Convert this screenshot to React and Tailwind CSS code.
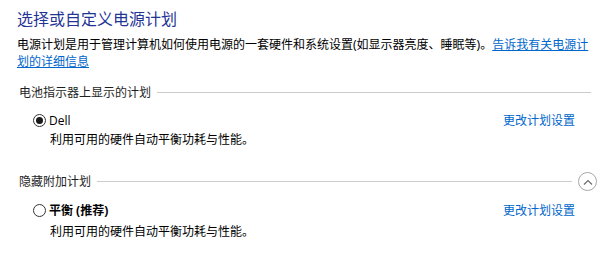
import React from 'react';

const Radio = ({ checked }) => (
    <span className="w-[13px] h-[13px] rounded-full border border-[#333333] bg-white flex items-center justify-center shrink-0">
        {checked && <span className="w-[7px] h-[7px] rounded-full bg-[#1a1a1a]"></span>}
    </span>
);

const SectionHeader = ({ title, collapsible }) => (
    <div className="flex items-center h-[19px] text-[12px] leading-[17px] text-[#1e1e1e]">
        <span className="ml-[2px]">{title}</span>
        <div className="flex-1 h-px bg-[#cccccc] ml-[6px] mr-[6px]"></div>
        {collapsible && (
            <button className="w-[19px] h-[19px] rounded-full border border-[#a8a8a8] flex items-center justify-center">
                <svg width="10" height="6" viewBox="0 0 10 6" fill="none">
                    <path d="M1 5.5 L5 1.5 L9 5.5" stroke="#6e6e6e" strokeWidth="1.2" />
                </svg>
            </button>
        )}
    </div>
);

const PlanRow = ({ name, checked, bold, descGap }) => (
    <div>
        <div className="flex items-center h-[17px] pl-[16px] pr-[22px]">
            <Radio checked={checked} />
            <span
                className={`ml-[3px] text-[12px] leading-[17px] text-black ${bold ? 'font-bold' : 'font-normal'}`}
                style={bold ? undefined : { fontFamily: '"Open Sans", "Noto Sans CJK SC", sans-serif' }}
            >
                {name}
            </span>
            <a className="ml-auto text-[12px] leading-[17px] text-[#0066cc] cursor-pointer">更改计划设置</a>
        </div>
        <p className={`pl-[33px] text-[12px] leading-[17px] text-black ${descGap}`}>
            利用可用的硬件自动平衡功耗与性能。
        </p>
    </div>
);

export default function App() {
    return (
        <div
            className="w-[608px] h-[263px] bg-white pl-[17px] pr-[11px] overflow-hidden"
            style={{ fontFamily: '"Noto Sans", "Noto Sans CJK SC", sans-serif' }}
        >
            {/* Title */}
            <h1 className="pt-[10px] text-[16px] leading-[19px] text-[#1f3596]">选择或自定义电源计划</h1>

            {/* Intro */}
            <div className="mt-[7px] text-[12px] leading-[17px] text-black">
                <span>电源计划是用于管理计算机如何使用电源的一套硬件和系统设置(如显示器亮度、睡眠等)。</span>
                <a className="text-[#0066cc] underline cursor-pointer">告诉我有关电源计划的详细信息</a>
            </div>

            {/* Battery meter plans */}
            <div className="mt-[13px]">
                <SectionHeader title="电池指示器上显示的计划" />
            </div>
            <div className="mt-[10px]">
                <PlanRow name="Dell" checked descGap="mt-[2px]" />
            </div>

            {/* Hidden plans */}
            <div className="mt-[24px]">
                <SectionHeader title="隐藏附加计划" collapsible />
            </div>
            <div className="mt-[11px]">
                <PlanRow name="平衡 (推荐)" bold descGap="mt-[4px]" />
            </div>
        </div>
    );
}
